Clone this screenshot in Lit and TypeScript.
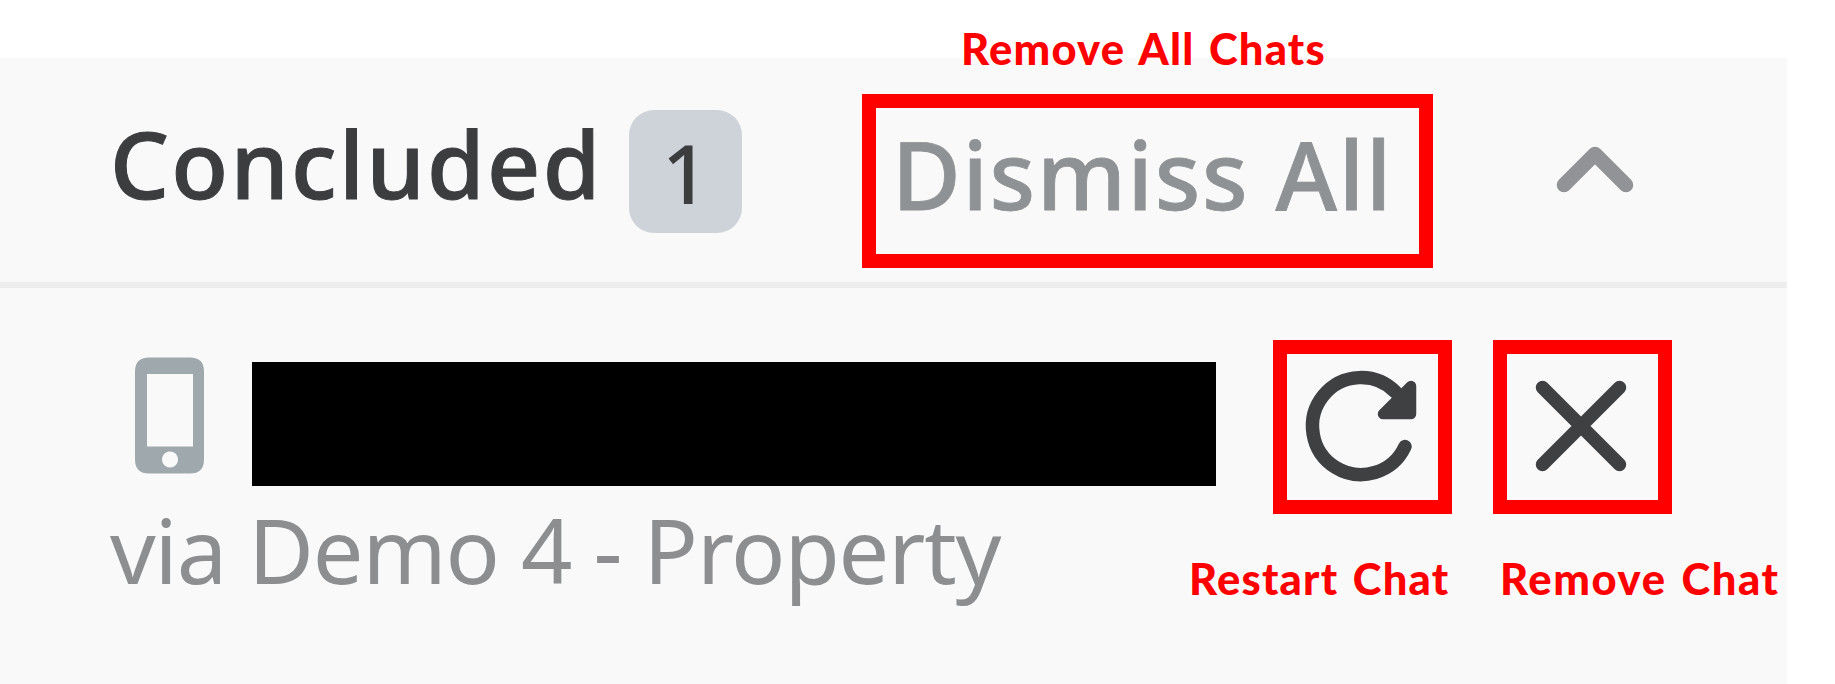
import { LitElement, html, css } from "lit";
import { customElement } from "lit/decorators.js";

@customElement("app-root")
export class AppRoot extends LitElement {
  static styles = css`
    :host { display: block; position: relative; width: 1835px; height: 684px; overflow: hidden; background: #fff; box-sizing: border-box; padding-top: 58px; font-family: "Noto Sans", sans-serif; }
    * { box-sizing: border-box; }
    svg { display: block; }
    .panel { width: 1787px; height: 626px; background: #f9f9f9; }
    .head { height: 230px; border-bottom: 6px solid #ededed; display: flex; align-items: flex-start; white-space: nowrap; }
    .title { margin: 46px 0 0 110px; width: 519px; font-size: 93px; line-height: 118px; font-weight: 500; letter-spacing: 2.3px; -webkit-text-stroke: 1px #3c3d3f; color: #3c3d3f; }
    .badge { margin-top: 52px; width: 113px; height: 123px; border-radius: 25px; background: #ced3da; display: flex; justify-content: center; font-size: 82px; line-height: 124px; font-weight: 500; color: #3c3d3f; }
    .dismiss { margin: 36px 0 0 120px; width: 571px; height: 174px; border: 14px solid #f00; padding-left: 16px; font-size: 94px; line-height: 132px; font-weight: 500; letter-spacing: 1.7px; -webkit-text-stroke: 0.8px #8f9295; color: #8f9295; }
    .chev { margin: 88px 0 0 122px; }
    .row { display: flex; align-items: flex-start; padding-top: 52px; height: 198px; }
    .phone { margin: 17px 0 0 135px; }
    .redacted { margin: 22px 0 0 48px; width: 964px; height: 124px; background: #000; }
    .action { width: 179px; height: 174px; border: 14px solid #f00; padding: 0; }
    .restart { margin-left: 57px; }
    .remove { margin-left: 41px; }
    .foot { display: flex; align-items: flex-start; height: 198px; white-space: nowrap; }
    .via { margin-left: 110px; width: 1079px; font-size: 90px; line-height: 127px; letter-spacing: -1.15px; color: #8c8e90; }
    .note { font-family: Lato, sans-serif; font-weight: 900; font-size: 43.5px; line-height: 60px; letter-spacing: 1.2px; word-spacing: 3px; color: #f00; white-space: nowrap; }
    .n1 { margin-top: 62px; width: 311px; }
    .n2 { margin-top: 62px; letter-spacing: 1.6px; }
    .top { position: absolute; left: 961px; top: 18px; }
  `;
  render() {
    return html`
      <div class="panel">
        <div class="head">
          <div class="title">Concluded</div>
          <div class="badge">1</div>
          <div class="dismiss">Dismiss All</div>
          <svg class="chev" width="80" height="48" viewBox="0 0 80 48"><path d="M9 39 40 8 71 39" fill="none" stroke="#919396" stroke-width="14.500" stroke-linecap="round" stroke-linejoin="round"/></svg>
        </div>
        <div class="row">
          <svg class="phone" width="69" height="117" viewBox="0 0 69 117"><path fill="#9fa8ad" fill-rule="evenodd" d="M14 0.500H55Q69 0.500 69 14.500V102.500Q69 116.500 55 116.500H14Q0 116.500 0 102.500V14.500Q0 0.500 14 0.500ZM12 17V89.500H58V17ZM35 94.500a8 8 0 1 0 .01 0Z"/></svg>
          <div class="redacted"></div>
          <div class="action restart"><svg width="151" height="146" viewBox="1287 354 151 146"><path d="M1405 446.500A48.500 48.500 0 1 1 1396 392.500" fill="none" stroke="#3f4042" stroke-width="13.500" stroke-linecap="round"/><path d="M1411 386V414H1383Z" fill="#3f4042" stroke="#3f4042" stroke-width="10.500" stroke-linejoin="round"/></svg></div>
          <div class="action remove"><svg width="151" height="146" viewBox="1507 354 151 146"><path d="M1542.500 387.500 1619.500 464.500M1619.500 387.500 1542.500 464.500" stroke="#3f4042" stroke-width="13.500" stroke-linecap="round"/></svg></div>
        </div>
        <div class="foot">
          <div class="via">via Demo 4 - Property</div>
          <div class="note n1">Restart Chat</div>
          <div class="note n2">Remove Chat</div>
        </div>
      </div>
      <div class="note top">Remove All Chats</div>
    `;
  }
}
